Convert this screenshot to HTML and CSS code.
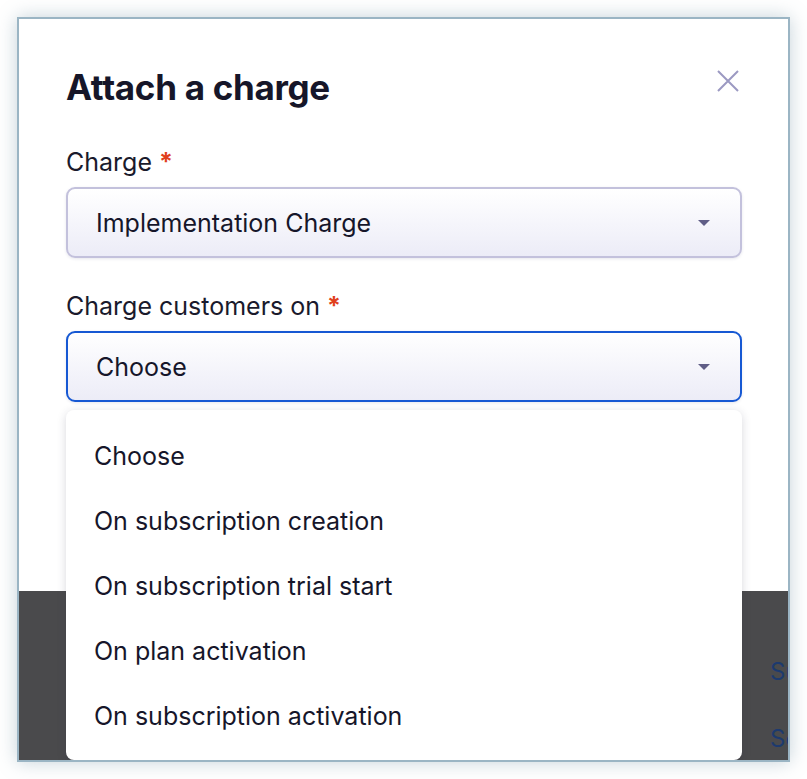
FILE: index.html
```html
<!DOCTYPE html>
<html lang="en">

<head>
    <meta charset="UTF-8">
    <meta name="viewport" content="width=device-width, initial-scale=1.0">
    <title>Attach a charge</title>
    <link rel="stylesheet" href="styles.css">
</head>

<body>
    <div class="frame">
        <div class="modal">
            <div class="modal-head">
                <h1 class="modal-title">Attach a charge</h1>
                <button class="close-btn" aria-label="Close">
                    <svg width="24" height="24" viewBox="0 0 24 24">
                        <path d="M2 2 L22 22 M22 2 L2 22" stroke="#9b99c2" stroke-width="2" fill="none" />
                    </svg>
                </button>
            </div>

            <div class="field">
                <label class="field-label">Charge <span class="req">*</span></label>
                <div class="select">
                    <span>Implementation Charge</span>
                    <span class="caret"></span>
                </div>
            </div>

            <div class="field">
                <label class="field-label">Charge customers on <span class="req">*</span></label>
                <div class="select focused">
                    <span>Choose</span>
                    <span class="caret"></span>
                </div>
                <ul class="menu">
                    <li>Choose</li>
                    <li>On subscription creation</li>
                    <li>On subscription trial start</li>
                    <li>On plan activation</li>
                    <li>On subscription activation</li>
                </ul>
            </div>
        </div>

        <!-- page behind the modal -->
        <div class="backdrop">
            <div class="backdrop-links">
                <span>Subscriptions</span>
                <span>Settings</span>
            </div>
        </div>
    </div>
</body>

</html>
```

FILE: styles.css
```css
body {
    margin: 0;
    padding: 0;
    background-color: #ffffff;
    font-family: Inter, "Noto Sans", sans-serif;
    color: #16162a;
}

.frame {
    margin: 17px;
    width: 769px;
    height: 741px;
    border: 2px solid #9bb5c4;
    box-shadow: 0 0 18px rgba(90, 125, 145, 0.35);
    display: flex;
    flex-direction: column;
    overflow: hidden;
    position: relative;
}

.modal {
    background-color: #ffffff;
    height: 572px;
    flex-shrink: 0;
    padding: 0 46px 0 47px;
    box-sizing: border-box;
}

.modal-head {
    display: flex;
    justify-content: space-between;
    align-items: center;
    padding-top: 46px;
    margin-bottom: 38px;
}

.modal-title {
    margin: 0;
    font-size: 35px;
    font-weight: 700;
    line-height: 44px;
    color: #161629;
    letter-spacing: -0.3px;
}

.close-btn {
    background: none;
    border: none;
    padding: 0;
    margin-right: 2px;
    margin-top: -12px;
    width: 24px;
    height: 24px;
    cursor: pointer;
}

.field {
    position: relative;
    margin-bottom: 33px;
}

.field-label {
    display: block;
    font-size: 25px;
    line-height: 30px;
    margin-bottom: 10px;
    color: #1a1a2c;
}

.req {
    color: #e0401c;
    font-weight: 700;
}

.select {
    height: 71px;
    box-sizing: border-box;
    border: 2px solid #c3c1dc;
    border-radius: 9px;
    background: linear-gradient(#ffffff, #ececf7);
    box-shadow: 0 1px 3px rgba(60, 60, 110, 0.12);
    display: flex;
    align-items: center;
    justify-content: space-between;
    padding: 0 30px 0 28px;
    font-size: 25px;
    color: #16162a;
}

.select.focused {
    border-color: #1658d3;
}

.caret {
    width: 0;
    height: 0;
    border-left: 6px solid transparent;
    border-right: 6px solid transparent;
    border-top: 6px solid #5f5d86;
}

.menu {
    position: absolute;
    left: 0;
    right: 0;
    top: 119px;
    z-index: 2;
    margin: 0;
    padding: 14px 0 10px;
    list-style: none;
    background-color: #ffffff;
    border-radius: 8px;
    box-shadow: 0 2px 10px rgba(40, 40, 70, 0.18);
    height: 350px;
    box-sizing: border-box;
}

.menu li {
    padding: 0 28px;
    height: 65px;
    line-height: 65px;
    font-size: 25px;
    color: #16162a;
}

.backdrop {
    flex: 1;
    background-color: #4a4a4c;
    display: flex;
    justify-content: flex-end;
}

.backdrop-links {
    width: 18px;
    overflow: hidden;
    display: flex;
    flex-direction: column;
    gap: 38px;
    padding-top: 66px;
    font-size: 24px;
    color: #1d3a6e;
    white-space: nowrap;
}
```
